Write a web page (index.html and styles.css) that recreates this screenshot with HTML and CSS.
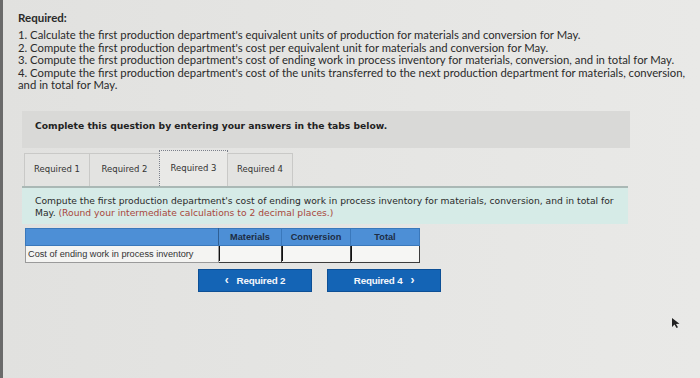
FILE: index.html
```html
<!DOCTYPE html>
<html lang="en">
<head>
  <meta charset="UTF-8">
  <title>Required 3</title>
  <link rel="stylesheet" href="styles.css">
</head>
<body>
  <div class="page">
    <div class="required">
      <div class="req-title">Required:</div>
      1. Calculate the first production department's equivalent units of production for materials and conversion for May.<br>
      2. Compute the first production department's cost per equivalent unit for materials and conversion for May.<br>
      3. Compute the first production department's cost of ending work in process inventory for materials, conversion, and in total for May.<br>
      4. Compute the first production department's cost of the units transferred to the next production department for materials, conversion,<br>
      and in total for May.
    </div>

    <div class="instructions">Complete this question by entering your answers in the tabs below.</div>

    <div class="tabs">
      <div class="tab">Required 1</div>
      <div class="tab">Required 2</div>
      <div class="tab active">Required 3</div>
      <div class="tab">Required 4</div>
    </div>

    <div class="panel">
      <p>Compute the first production department's cost of ending work in process inventory for materials, conversion, and in total for</p>
      <p>May. <span class="hint">(Round your intermediate calculations to 2 decimal places.)</span></p>
    </div>

    <table class="grid">
      <tr class="head">
        <th class="label"></th>
        <th>Materials</th>
        <th>Conversion</th>
        <th>Total</th>
      </tr>
      <tr>
        <td class="label">Cost of ending work in process inventory</td>
        <td class="cell"><input type="text"></td>
        <td class="cell"><input type="text"></td>
        <td class="cell"><input type="text"></td>
      </tr>
    </table>

    <div class="nav">
      <button class="btn"><span class="chev">&lsaquo;</span>Required 2</button>
      <button class="btn">Required 4<span class="chev after">&rsaquo;</span></button>
    </div>
  </div>

  <svg class="cursor" width="10" height="12" viewBox="0 0 10 12">
    <path d="M1 1 L1 10 L3.5 7.6 L5.5 11 L7 10.2 L5 7 L8.5 6.8 Z" fill="#222"/>
  </svg>
</body>
</html>
```

FILE: styles.css
```css
body {
  margin: 0;
  height: 378px;
  overflow: hidden;
  background: linear-gradient(90deg, #e1e1df 0%, #e6e6e4 60%, #e9e9e7 100%);
  border-left: 3px solid #6a6a6a;
  box-sizing: border-box;
  position: relative;
}
.page {
  padding: 11px 0 0 15px;
}
.required {
  font-family: Lato, "Open Sans", sans-serif;
  font-size: 11.3px;
  line-height: 12.5px;
  color: #2b2b2b;
}
.req-title {
  font-weight: 700;
  font-size: 11.5px;
  line-height: 14px;
  margin-bottom: 4px;
}
.instructions {
  margin: 19px 0 0 4px;
  width: 595px;
  height: 37px;
  padding-left: 13px;
  background: #d9d9d7;
  font-family: "DejaVu Sans", sans-serif;
  font-weight: bold;
  font-size: 9.2px;
  line-height: 30px;
  color: #222;
}
.tabs {
  display: flex;
  align-items: flex-end;
  margin: 2px 0 0 6px;
  height: 36px;
}
.tab {
  width: 66px;
  height: 33px;
  border: 1px solid #c9c9c7;
  border-bottom: none;
  box-sizing: border-box;
  background: #e3e3e1;
  font-family: "DejaVu Sans", sans-serif;
  font-size: 8.5px;
  line-height: 30px;
  text-align: center;
  color: #333;
}
.tab + .tab {
  margin-left: -1px;
}
.tab:nth-child(2) { width: 71px; }
.tab.active {
  width: 69px;
  height: 36px;
  border: 1px dotted #7a7f8a;
  border-bottom: none;
  background: #e9e9e7;
  line-height: 34px;
}
.panel {
  margin-left: 4px;
  width: 590px;
  padding: 7px 3px 5px 13px;
  border-top: 2px solid #aab8b5;
  background: #d6ebe7;
  font-family: "DejaVu Sans", sans-serif;
  font-size: 9.2px;
  line-height: 12px;
  color: #2a2a2a;
}
.panel p {
  margin: 0;
  white-space: nowrap;
}
.hint {
  color: #a8473c;
}
.grid {
  margin: 4px 0 0 7px;
  border-collapse: collapse;
  font-family: "Liberation Sans", Arial, sans-serif;
  font-size: 9.2px;
}
.grid th {
  height: 16px;
  padding: 0;
  background: #4d8fd6;
  border: 1px solid #3a78bb;
  font-weight: bold;
  color: #1d2d44;
  width: 62px;
}
.grid th:nth-child(3) { width: 68px; }
.grid th:nth-child(4) { width: 68px; }
.grid th.label {
  width: 192px;
  border-right: 1px solid #2f5f94;
}
.grid td {
  height: 16px;
  padding: 0;
  background: #f4f4f2;
  border: 1px solid #777;
}
.grid td.label {
  padding-left: 2px;
  color: #333;
  border-color: #9a9a9a;
}
.grid td.cell {
  border: 1.5px solid #3c3c3c;
}
.grid input {
  width: 100%;
  height: 15px;
  box-sizing: border-box;
  border: none;
  border-left: 1px solid #111;
  background: #f6f6f4;
  display: block;
}
.nav {
  display: flex;
  gap: 15px;
  margin: 6px 0 0 180px;
}
.btn {
  width: 114px;
  height: 23px;
  border: 1px solid #0d4f95;
  background: #1464b5;
  color: #f4f7fb;
  font-family: "Liberation Sans", Arial, sans-serif;
  font-weight: bold;
  font-size: 9.8px;
  letter-spacing: -0.2px;
  cursor: pointer;
}
.chev {
  font-size: 12px;
  margin-right: 8px;
}
.chev.after {
  margin: 0 0 0 8px;
}
.cursor {
  position: absolute;
  left: 668px;
  top: 317px;
}
```
